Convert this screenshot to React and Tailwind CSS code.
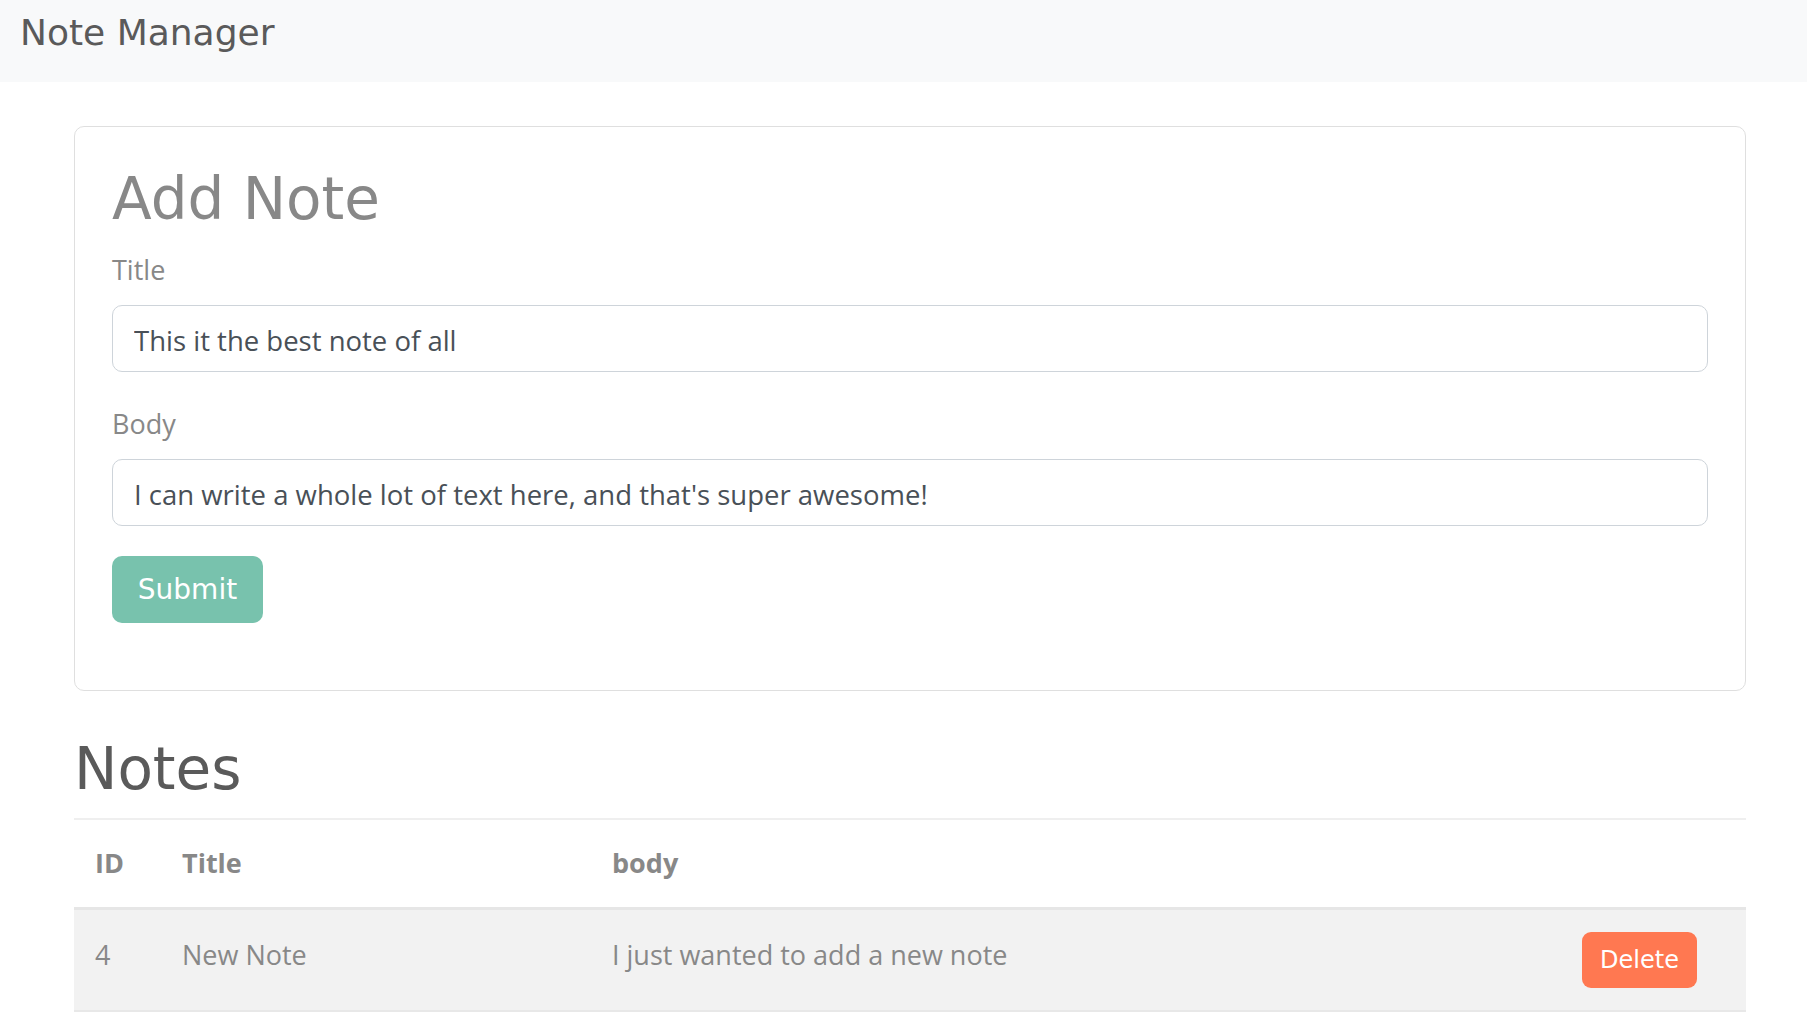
import React from 'react';

// Minty-style note manager
const heading = { fontFamily: '"DejaVu Sans", Verdana, sans-serif' };
const body = { fontFamily: '"Open Sans", "Noto Sans", sans-serif' };

const notes = [{ id: 4, title: 'New Note', body: 'I just wanted to add a new note' }];

const Field = ({ label, value, className = '' }) => (
    <div className={className}>
        <label className="block text-[27px] leading-[42px] text-[#888] mb-[14px]" style={body}>
            {label}
        </label>
        <input
            readOnly
            value={value}
            className="block w-full h-[67px] px-[21px] pt-[4px] border border-[#ced4da] rounded-[10px] bg-white text-[27.5px] text-[#495057] outline-none"
            style={body}
        />
    </div>
);

export default function App() {
    return (
        <div className="min-h-screen bg-white">
            {/* Navbar */}
            <nav className="h-[82px] bg-[#f8f9fa] pl-[20px] pt-[12px]">
                <span className="text-[36px] leading-[42px] text-[#5a5a5a]" style={heading}>
                    Note Manager
                </span>
            </nav>

            <div className="pl-[74px] pr-[61px] pt-[44px]">
                {/* Add note card */}
                <div className="border border-[#dfdfdf] rounded-[10px] px-[37px] pt-[37px] pb-[67px]">
                    <h1 className="text-[58px] leading-[70px] text-[#888] mb-[15px]" style={heading}>
                        Add Note
                    </h1>
                    <Field label="Title" value="This it the best note of all" className="mb-[31px]" />
                    <Field label="Body" value="I can write a whole lot of text here, and that's super awesome!" className="mb-[30px]" />
                    <button
                        className="w-[151px] h-[67px] rounded-[10px] bg-[#78c2ad] text-white text-[28px]"
                        style={heading}
                    >
                        Submit
                    </button>
                </div>

                {/* Notes list */}
                <h2 className="mt-[44px] text-[58px] leading-[68px] text-[#5a5a5a] mb-[15px]" style={heading}>
                    Notes
                </h2>
                <table className="w-full border-collapse text-left" style={body}>
                    <thead>
                        <tr className="border-t-2 border-b-[3px] border-t-[#efefef] border-b-[#e6e6e6]">
                            <th className="w-[87px] px-[21px] pt-[22px] pb-[23px] text-[27px] leading-[42px] font-bold text-[#888]">ID</th>
                            <th className="w-[430px] px-[21px] pt-[22px] pb-[23px] text-[27px] leading-[42px] font-bold text-[#888]">Title</th>
                            <th className="px-[21px] pt-[22px] pb-[23px] text-[27px] leading-[42px] font-bold text-[#888]">body</th>
                            <th className="w-[240px]"></th>
                        </tr>
                    </thead>
                    <tbody>
                        {notes.map((note) => (
                            <tr key={note.id} className="bg-[#f2f2f2] border-b-2 border-b-[#e8e8e8]">
                                <td className="align-top px-[21px] pt-[24px] text-[27px] leading-[42px] text-[#888]">{note.id}</td>
                                <td className="align-top px-[21px] pt-[24px] text-[27px] leading-[42px] text-[#888]">{note.title}</td>
                                <td className="align-top px-[21px] pt-[24px] text-[27px] leading-[42px] text-[#888]">{note.body}</td>
                                <td className="align-top text-right pr-[49px] py-[22px]">
                                    <button
                                        className="w-[115px] h-[56px] rounded-[9px] bg-[#ff7851] text-white text-[24px]"
                                        style={heading}
                                    >
                                        Delete
                                    </button>
                                </td>
                            </tr>
                        ))}
                    </tbody>
                </table>
            </div>
        </div>
    );
}
